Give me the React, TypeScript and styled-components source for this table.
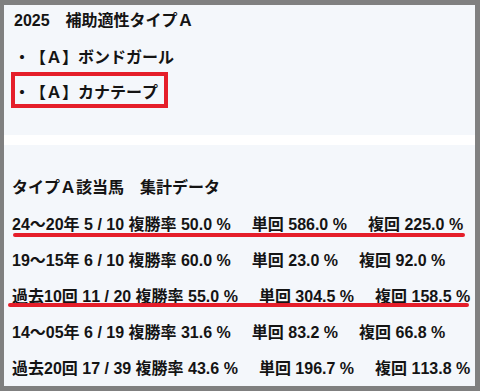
import React from "react";
import styled, { createGlobalStyle } from "styled-components";

const Global = createGlobalStyle`
  html, body { margin: 0; padding: 0; background: #808080; }
  body {
    font-family: "Liberation Sans", "Noto Sans CJK JP", sans-serif;
    font-weight: bold;
    font-size: 16px;
    color: #141414;
    text-spacing-trim: space-all;
    font-kerning: none;
  }
`;

const Frame = styled.div`
  width: 480px;
  height: 391px;
  box-sizing: border-box;
  padding: 5px 5px 5px 4px;
  background: #808080;
`;

const Sheet = styled.div`
  height: 100%;
  background: #ffffff;
  display: flex;
  flex-direction: column;
  gap: 10px;
`;

const Card = styled.section<{ $pt: number; $pl: number; $grow?: boolean }>`
  background: #f4f7fb;
  box-sizing: border-box;
  padding: ${(p) => p.$pt}px 0 0 ${(p) => p.$pl}px;
  ${(p) => (p.$grow ? "flex: 1;" : "height: 130px;")}
`;

const Title = styled.div`
  height: 28px;
  display: flex;
  align-items: center;
  white-space: pre;
`;

const List = styled.div`
  margin-top: 5px;
  display: flex;
  flex-direction: column;
`;

const Item = styled.div<{ $boxed?: boolean }>`
  position: relative;
  width: fit-content;
  height: 35px;
  display: flex;
  align-items: center;
  white-space: pre;
  ${(p) =>
    p.$boxed &&
    `
    &::after {
      content: "";
      position: absolute;
      left: -3px;
      right: -10px;
      top: -1px;
      bottom: 0;
      border: 4px solid #e51e2a;
    }
  `}
`;

const Heading = styled.div`
  height: 36px;
  display: flex;
  align-items: center;
  white-space: pre;
  margin-bottom: 1px;
`;

const Row = styled.div`
  position: relative;
  height: 36px;
  display: flex;
  align-items: center;
  gap: 21px;
  white-space: pre;
`;

const Mark = styled.span<{ $left: number; $right: number; $top: number }>`
  position: absolute;
  left: ${(p) => p.$left}px;
  right: ${(p) => p.$right}px;
  top: ${(p) => p.$top}px;
  height: 4px;
  border-radius: 2px;
  background: #e51e2a;
`;

type Stat = {
  label: string;
  hits: string;
  place: string;
  win: string;
  show: string;
  mark?: { left: number; right: number; top: number };
};

const stats: Stat[] = [
  { label: "24〜20年", hits: "5 / 10", place: "50.0", win: "586.0", show: "225.0", mark: { left: 1, right: 10, top: 28 } },
  { label: "19〜15年", hits: "6 / 10", place: "60.0", win: "23.0", show: "92.0" },
  { label: "過去10回", hits: "11 / 20", place: "55.0", win: "304.5", show: "158.5", mark: { left: -4, right: 6, top: 26 } },
  { label: "14〜05年", hits: "6 / 19", place: "31.6", win: "83.2", show: "66.8" },
  { label: "過去20回", hits: "17 / 39", place: "43.6", win: "196.7", show: "113.8" },
];

export default function App() {
  return (
    <>
      <Global />
      <Frame>
        <Sheet>
          <Card $pt={0} $pl={10}>
            <Title>2025　補助適性タイプＡ</Title>
            <List>
              <Item>・【Ａ】ボンドガール</Item>
              <Item $boxed>・【Ａ】カナテープ</Item>
            </List>
          </Card>
          <Card $pt={23} $pl={8} $grow>
            <Heading>タイプＡ該当馬　集計データ</Heading>
            {stats.map((s) => (
              <Row key={s.label}>
                <span>{`${s.label} ${s.hits} 複勝率 ${s.place} %`}</span>
                <span>{`単回 ${s.win} %`}</span>
                <span>{`複回 ${s.show} %`}</span>
                {s.mark && <Mark $left={s.mark.left} $right={s.mark.right} $top={s.mark.top} />}
              </Row>
            ))}
          </Card>
        </Sheet>
      </Frame>
    </>
  );
}
